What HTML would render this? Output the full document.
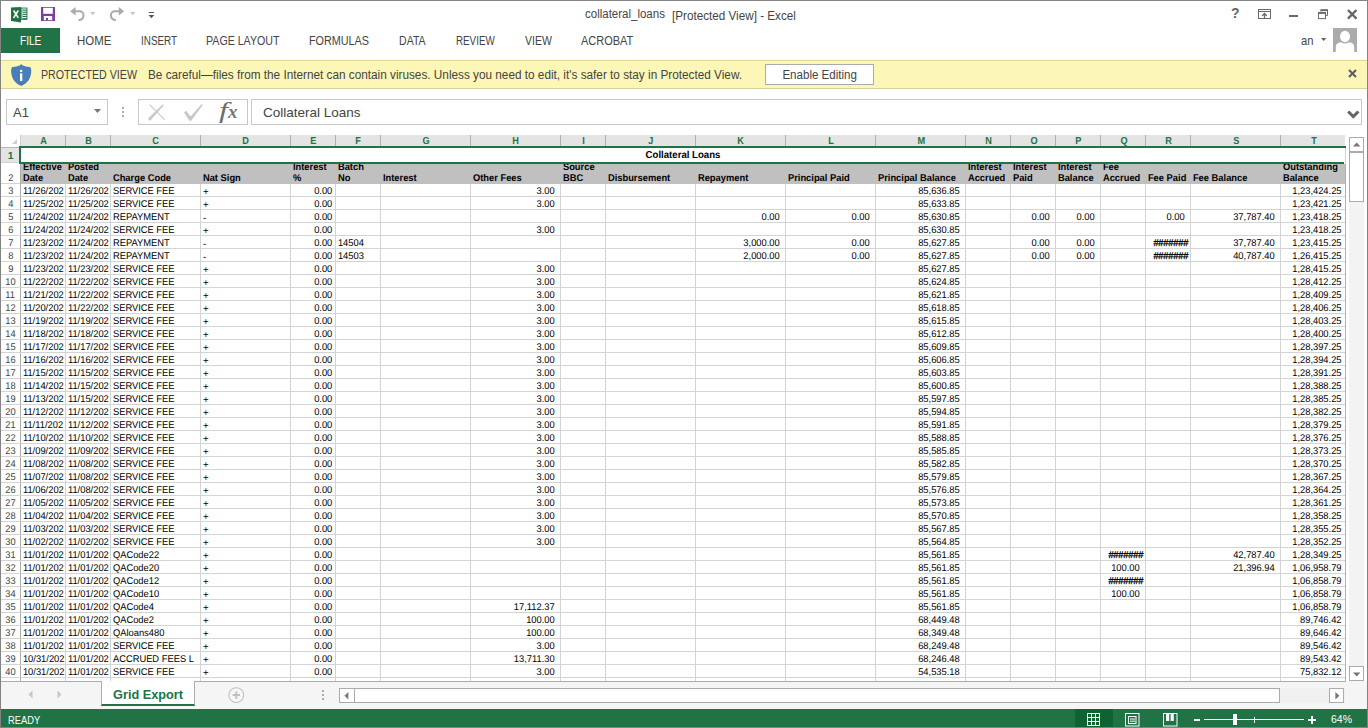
<!DOCTYPE html>
<html><head><meta charset="utf-8"><title>collateral_loans [Protected View] - Excel</title>
<style>
*{box-sizing:border-box;margin:0;padding:0}
html,body{width:1368px;height:728px;overflow:hidden;background:#fff;font-family:"Liberation Sans",sans-serif;color:#444}
#win{position:absolute;left:0;top:0;width:1368px;height:728px;border:1px solid #838383;border-right-color:#838383;overflow:hidden}
.abs{position:absolute}
/* title bar */
.ttl{position:absolute;line-height:15px;font-size:12.5px;color:#444;white-space:nowrap}
/* ribbon tabs */
#file{position:absolute;left:0;top:27px;width:59px;height:25px;background:#217346;color:#fff;font-size:12px;text-align:center;line-height:25px}
.sx{transform-origin:0 50%}
.tab{position:absolute;top:28px;height:25px;line-height:25px;font-size:12px;color:#444;white-space:nowrap}
/* protected bar */
#pv{position:absolute;left:0;top:59px;width:1366px;height:29px;background:#fcf7b6;border-top:1px solid #ddd78f;border-bottom:1px solid #d8d39a}
#pv .t1{position:absolute;left:40px;top:0;line-height:28px;font-size:12.5px;color:#444}
#pv .t2{position:absolute;left:147px;top:0;line-height:28px;font-size:12.3px;color:#444;white-space:nowrap}
#pv .btn{position:absolute;left:764px;top:3px;width:109px;height:21px;background:#fff;border:1px solid #ababab;font-size:12.3px;text-align:center;line-height:21px;color:#444}
/* formula bar */
.box{position:absolute;top:98px;height:26px;border:1px solid #c8c8c8;background:#fff}
/* grid */
#grid{position:absolute;left:-1px;top:-1px;width:1368px;height:728px;text-rendering:geometricPrecision}
.ch.last{border-right:none}
.ch{position:absolute;top:135px;height:11px;border-right:1px solid #b2b2b2;color:#217346;font-size:10.2px;text-align:center;line-height:13.4px;font-weight:bold;padding-left:1px}
.ch span{display:inline-block;transform:scaleX(0.9)}
.rh{position:absolute;left:1px;width:20px;color:#444;font-size:9.75px;text-align:center;line-height:15.4px;border-right:1px solid #ababab}
.rh span{display:inline-block;transform:scaleX(0.954)}
.rh.r2{line-height:34.4px}
.vl{position:absolute;top:146px;width:1px;height:540px;background:#d4d4d4}
.hl{position:absolute;left:1px;width:1345px;height:1px;background:#d4d4d4}
.c{position:absolute;height:12px;line-height:16.4px;font-size:9.8px;transform:scaleX(0.954);transform-origin:0 0;color:#000;white-space:nowrap;padding-left:2px}
.c.n{text-align:right;padding-right:5.5px;padding-left:0;transform-origin:100% 0}
.c.cD{line-height:18.4px;font-size:10.1px}
.c.n.cE{padding-right:2.8px}
.c.n.cT{padding-right:3.6px}
.c.n.hs{padding-right:2px;letter-spacing:-0.25px;-webkit-text-stroke:0.3px #000}
.h2{position:absolute;top:164px;height:20px;font-size:9.8px;transform:scaleX(0.954);transform-origin:0 0;font-weight:bold;color:#000;line-height:11px;white-space:nowrap;overflow:hidden}
.h2 span{position:absolute;left:2px;bottom:0.1px}
.sb{background:#fff;border:1px solid #ababab}
</style></head><body>
<div id="win">

<!-- quick access toolbar icons -->
<svg class="abs" style="left:10px;top:6px" width="17" height="16" viewBox="0 0 17 16">
<path d="M0,0.5 L10,0 L10,15.4 L0,13.9 Z" fill="#207245"/>
<rect x="10" y="0.6" width="6.4" height="12.2" fill="#207245"/>
<g fill="#fff"><rect x="10.6" y="1.5" width="0.9" height="10.4"/><rect x="11.5" y="1.5" width="4" height="1.1"/><rect x="11.5" y="3.7" width="4" height="1"/><rect x="11.5" y="5.8" width="4" height="1"/><rect x="11.5" y="7.9" width="4" height="1"/><rect x="11.5" y="10" width="4" height="1.1"/></g>
<path d="M2.6,3.5 L7.3,10.9 M7.3,3.5 L2.6,10.9" stroke="#fff" stroke-width="1.6" fill="none"/>
</svg>
<svg class="abs" style="left:40px;top:6px" width="14" height="14" viewBox="0 0 14 14">
<rect x="0" y="0" width="14" height="14" fill="#7e3f9b"/>
<rect x="2.2" y="0.8" width="9.6" height="6" fill="#fff"/>
<rect x="2.8" y="9" width="8.4" height="4.2" fill="#fff"/>
<rect x="5" y="11" width="2" height="2.2" fill="#7e3f9b"/>
</svg>
<svg class="abs" style="left:67.6px;top:4.6px" width="18" height="16" viewBox="0 0 18 16">
<path d="M1.2,5.2 L6.6,1 L6.6,4.1 L6.6,9.4 Z" fill="#ababab"/>
<path d="M6,5.2 H10.5 A4,4 0 0 1 14.5,9.2 A4.6,4.6 0 0 1 9.5,14" stroke="#ababab" stroke-width="2" fill="none"/>
</svg>
<svg class="abs" style="left:107.3px;top:5px" width="18" height="16" viewBox="0 0 18 16">
<g transform="translate(18,0) scale(-1,1)">
<path d="M1.8,5.2 L7.2,1 L7.2,4.1 L7.2,9.4 Z" fill="#ababab"/>
<path d="M6.6,5.2 H11.1 A4,4 0 0 1 15.1,9.2 A4.6,4.6 0 0 1 10.1,14" stroke="#ababab" stroke-width="2" fill="none"/>
</g></svg>
<svg class="abs" style="left:89px;top:11px" width="6" height="4" viewBox="0 0 6 4"><path d="M0,0H5.4L2.7,3.2Z" fill="#c6c6c6"/></svg>
<svg class="abs" style="left:129px;top:11px" width="6" height="4" viewBox="0 0 6 4"><path d="M0,0H5.4L2.7,3.2Z" fill="#c6c6c6"/></svg>
<svg class="abs" style="left:147px;top:10px" width="7" height="8" viewBox="0 0 7 8"><rect x="0.8" y="1" width="5.2" height="1" fill="#555"/><path d="M0.6,4H6.2L3.4,7.2Z" fill="#555"/></svg>
<!-- window controls -->
<div class="abs" style="left:1230px;top:5px;width:10px;font-size:14px;font-weight:bold;color:#666;line-height:15px">?</div>
<svg class="abs" style="left:1257px;top:8px" width="14" height="11" viewBox="0 0 14 11"><rect x="0.5" y="0.5" width="12" height="9" fill="none" stroke="#6a6a6a"/><path d="M0.5,2.5H12.5" stroke="#6a6a6a"/><path d="M6.5,4.6V9M4.1,6.9L6.5,4.5L8.9,6.9" stroke="#6a6a6a" stroke-width="1.3" fill="none"/></svg>
<div class="abs" style="left:1288px;top:14px;width:9px;height:2px;background:#6a6a6a"></div>
<svg class="abs" style="left:1317px;top:8px" width="11" height="11" viewBox="0 0 11 11"><path d="M3,2.6V0.9H9.5V6.4H8" fill="none" stroke="#6a6a6a" stroke-width="1"/><rect x="2.5" y="0.4" width="7.5" height="1.7" fill="#6a6a6a"/><rect x="0.5" y="3.6" width="7" height="6" fill="#fff" stroke="#6a6a6a" stroke-width="1"/><rect x="0" y="3.1" width="8" height="1.8" fill="#6a6a6a"/></svg>
<svg class="abs" style="left:1346px;top:8px" width="11" height="11" viewBox="0 0 11 11"><path d="M0.9,1L9.5,9.6M9.5,1L0.9,9.6" stroke="#656565" stroke-width="2.3"/></svg>
<div class="abs sx" style="left:1300.4px;top:32.6px;font-size:12.2px;color:#444;line-height:15px;transform:scaleX(0.92)">an</div>
<svg class="abs" style="left:1320px;top:37px" width="6" height="4" viewBox="0 0 6 4"><path d="M0,0H5.4L2.7,3Z" fill="#666"/></svg>
<svg class="abs" style="left:1332px;top:27px" width="24" height="24" viewBox="0 0 24 24"><rect width="24" height="24" fill="#ababab"/><ellipse cx="12" cy="8.5" rx="5" ry="5.8" fill="#fff"/><path d="M2.8,24 V19 Q2.8,14.6 8,14.2 Q12,16.8 16,14.2 Q21.2,14.6 21.2,19 V24Z" fill="#fff"/></svg>
<div class="ttl sx" style="left:584px;top:6px;transform:scaleX(0.92)">collateral_loans</div><div class="ttl sx" style="left:671px;top:8px;transform:scaleX(0.935)">[Protected View] - Excel</div>
<div id="file"></div><div class="tab sx" style="left:19px;color:#fff;transform:scaleX(0.84)">FILE</div>
<div class="tab sx" style="left:76px;transform:scaleX(0.953)">HOME</div>
<div class="tab sx" style="left:140px;transform:scaleX(0.823)">INSERT</div>
<div class="tab sx" style="left:205px;transform:scaleX(0.886)">PAGE LAYOUT</div>
<div class="tab sx" style="left:308px;transform:scaleX(0.9)">FORMULAS</div>
<div class="tab sx" style="left:398px;transform:scaleX(0.88)">DATA</div>
<div class="tab sx" style="left:455px;transform:scaleX(0.817)">REVIEW</div>
<div class="tab sx" style="left:524px;transform:scaleX(0.874)">VIEW</div>
<div class="tab sx" style="left:580px;transform:scaleX(0.916)">ACROBAT</div>
<div id="pv"><span class="t1 sx" style="transform:scaleX(0.853)">PROTECTED VIEW</span><span class="t2 sx" style="transform:scaleX(0.957)">Be careful—files from the Internet can contain viruses. Unless you need to edit, it's safer to stay in Protected View.</span><div class="btn"><span class="sx" style="display:inline-block;transform-origin:50% 50%;transform:scaleX(0.94)">Enable Editing</span></div><svg class="abs" style="left:10px;top:3px" width="21" height="23" viewBox="0 0 21 23"><path d="M10.2,0.3 C8,2 5,3 1.3,3 C0.1,4 0.1,6 0.2,8 C0.5,14 3.4,19 10.2,22 C17,19 19.9,14 20.2,8 C20.3,6 20.3,4 19.1,3 C15.4,3 12.4,2 10.2,0.3 Z" fill="#4a7ebb"/><rect x="9" y="9.4" width="2.3" height="7.6" fill="#fff"/><rect x="9" y="5.8" width="2.3" height="2.3" rx="0.6" fill="#fff"/></svg>
<svg class="abs" style="left:1346.6px;top:8.4px" width="10" height="10" viewBox="0 0 10 10"><path d="M1,1L8,8M8,1L1,8" stroke="#5e5e5e" stroke-width="2.1"/></svg></div>
<div class="box" style="left:5px;width:102px"></div>
<div class="box" style="left:137px;width:110px"></div>
<div class="box" style="left:250px;width:1111px"></div>

<div class="abs" style="left:12px;top:104px;font-size:13px;color:#444;line-height:15px">A1</div>
<svg class="abs" style="left:93px;top:108px" width="8" height="5" viewBox="0 0 8 5"><path d="M0,0H7L3.5,4Z" fill="#777"/></svg>
<div class="abs" style="left:121px;top:106px;width:2px;height:2px;background:#ababab"></div>
<div class="abs" style="left:121px;top:110px;width:2px;height:2px;background:#ababab"></div>
<div class="abs" style="left:121px;top:114px;width:2px;height:2px;background:#ababab"></div>
<svg class="abs" style="left:147px;top:103px" width="19" height="18" viewBox="0 0 19 18"><path d="M0.2,14.2 L14.6,0.6 L16,0.9 L2.4,16.4 L0.6,16.2 Z" fill="#c8c8c8"/><path d="M1,0.8 L2.4,0.6 L17.2,15.6 L16.4,16.3 Z" fill="#c8c8c8"/></svg>
<svg class="abs" style="left:183px;top:103px" width="20" height="18" viewBox="0 0 20 18"><path d="M0,8.6 L2.2,6.8 L6.6,12.4 L17.4,0.3 L18.8,1 L7.2,16.8 L5.4,16.8 Z" fill="#c8c8c8"/></svg>
<div class="abs sx" style="left:218px;top:96px;font-family:'Liberation Serif',serif;font-style:italic;font-size:24px;color:#6e6e6e;line-height:26px;transform:scaleX(1.35)">f</div>
<div class="abs" style="left:227px;top:101px;font-family:'Liberation Serif',serif;font-style:italic;font-weight:bold;font-size:19px;color:#777;line-height:20px">x</div>
<div class="abs" style="left:262px;top:104px;font-size:13.5px;color:#444;line-height:15px">Collateral Loans</div>
<svg class="abs" style="left:1346px;top:109px" width="13" height="9" viewBox="0 0 13 9"><path d="M1.2,1.5L6.3,6.6L11.4,1.5" stroke="#666" stroke-width="3.1" fill="none"/></svg>
<div id="grid">
<div class="abs" style="left:21px;top:135px;width:1324px;height:11px;background:#e4e4e4"></div><div class="abs" style="left:20px;top:135px;width:1px;height:11px;background:#cfcfcf"></div>
<svg class="abs" style="left:12px;top:139px" width="6" height="6" viewBox="0 0 6 6"><path d="M5,0V5H0Z" fill="#d0d0d0"/></svg>
<div class="ch" style="left:21px;width:45px"><span>A</span></div><div class="ch" style="left:66px;width:45px"><span>B</span></div><div class="ch" style="left:111px;width:90px"><span>C</span></div><div class="ch" style="left:201px;width:90px"><span>D</span></div><div class="ch" style="left:291px;width:45px"><span>E</span></div><div class="ch" style="left:336px;width:45px"><span>F</span></div><div class="ch" style="left:381px;width:90px"><span>G</span></div><div class="ch" style="left:471px;width:90px"><span>H</span></div><div class="ch" style="left:561px;width:45px"><span>I</span></div><div class="ch" style="left:606px;width:90px"><span>J</span></div><div class="ch" style="left:696px;width:90px"><span>K</span></div><div class="ch" style="left:786px;width:90px"><span>L</span></div><div class="ch" style="left:876px;width:90px"><span>M</span></div><div class="ch" style="left:966px;width:45px"><span>N</span></div><div class="ch" style="left:1011px;width:45px"><span>O</span></div><div class="ch" style="left:1056px;width:45px"><span>P</span></div><div class="ch" style="left:1101px;width:45px"><span>Q</span></div><div class="ch" style="left:1146px;width:45px"><span>R</span></div><div class="ch" style="left:1191px;width:90px"><span>S</span></div><div class="ch last" style="left:1281px;width:65px"><span>T</span></div>
<div class="abs" style="left:1px;top:146px;width:19px;height:535px;background:#fff"></div>
<div class="rh r1" style="top:148px;height:14px"><span>1</span></div><div class="rh r2" style="top:162px;height:22px"><span>2</span></div><div class="rh r3" style="top:184px;height:13px"><span>3</span></div><div class="rh r4" style="top:197px;height:13px"><span>4</span></div><div class="rh r5" style="top:210px;height:13px"><span>5</span></div><div class="rh r6" style="top:223px;height:13px"><span>6</span></div><div class="rh r7" style="top:236px;height:13px"><span>7</span></div><div class="rh r8" style="top:249px;height:13px"><span>8</span></div><div class="rh r9" style="top:262px;height:13px"><span>9</span></div><div class="rh r10" style="top:275px;height:13px"><span>10</span></div><div class="rh r11" style="top:288px;height:13px"><span>11</span></div><div class="rh r12" style="top:301px;height:13px"><span>12</span></div><div class="rh r13" style="top:314px;height:13px"><span>13</span></div><div class="rh r14" style="top:327px;height:13px"><span>14</span></div><div class="rh r15" style="top:340px;height:13px"><span>15</span></div><div class="rh r16" style="top:353px;height:13px"><span>16</span></div><div class="rh r17" style="top:366px;height:13px"><span>17</span></div><div class="rh r18" style="top:379px;height:13px"><span>18</span></div><div class="rh r19" style="top:392px;height:13px"><span>19</span></div><div class="rh r20" style="top:405px;height:13px"><span>20</span></div><div class="rh r21" style="top:418px;height:13px"><span>21</span></div><div class="rh r22" style="top:431px;height:13px"><span>22</span></div><div class="rh r23" style="top:444px;height:13px"><span>23</span></div><div class="rh r24" style="top:457px;height:13px"><span>24</span></div><div class="rh r25" style="top:470px;height:13px"><span>25</span></div><div class="rh r26" style="top:483px;height:13px"><span>26</span></div><div class="rh r27" style="top:496px;height:13px"><span>27</span></div><div class="rh r28" style="top:509px;height:13px"><span>28</span></div><div class="rh r29" style="top:522px;height:13px"><span>29</span></div><div class="rh r30" style="top:535px;height:13px"><span>30</span></div><div class="rh r31" style="top:548px;height:13px"><span>31</span></div><div class="rh r32" style="top:561px;height:13px"><span>32</span></div><div class="rh r33" style="top:574px;height:13px"><span>33</span></div><div class="rh r34" style="top:587px;height:13px"><span>34</span></div><div class="rh r35" style="top:600px;height:13px"><span>35</span></div><div class="rh r36" style="top:613px;height:13px"><span>36</span></div><div class="rh r37" style="top:626px;height:13px"><span>37</span></div><div class="rh r38" style="top:639px;height:13px"><span>38</span></div><div class="rh r39" style="top:652px;height:13px"><span>39</span></div><div class="rh r40" style="top:665px;height:13px"><span>40</span></div><div class="rh r41" style="top:678px;height:13px"><span>41</span></div>
<div class="abs" style="left:1px;top:148px;width:19px;height:14px;background:#e4e4e4"></div>
<div class="abs" style="left:1px;top:147px;width:19px;height:1px;background:#b8b8b8"></div><div class="abs" style="left:1px;top:162px;width:19px;height:1px;background:#b8b8b8"></div><div class="rh" style="top:148px;height:14px;line-height:18.6px;color:#217346;background:none;border:none;font-weight:bold;font-size:10.3px;width:19px">1</div>
<div class="abs" style="left:1px;top:183px;width:19px;height:1px;background:#d4d4d4"></div><div class="abs" style="left:1px;top:162px;width:19px;height:1px;background:#d4d4d4"></div>
<div class="abs" id="cells" style="left:0;top:146px;width:1346px;height:535px;overflow:hidden"><div class="abs" style="left:0;top:-146px;width:1346px;height:728px">
<div class="vl" style="left:65px"></div><div class="vl" style="left:110px"></div><div class="vl" style="left:200px"></div><div class="vl" style="left:290px"></div><div class="vl" style="left:335px"></div><div class="vl" style="left:380px"></div><div class="vl" style="left:470px"></div><div class="vl" style="left:560px"></div><div class="vl" style="left:605px"></div><div class="vl" style="left:695px"></div><div class="vl" style="left:785px"></div><div class="vl" style="left:875px"></div><div class="vl" style="left:965px"></div><div class="vl" style="left:1010px"></div><div class="vl" style="left:1055px"></div><div class="vl" style="left:1100px"></div><div class="vl" style="left:1145px"></div><div class="vl" style="left:1190px"></div><div class="vl" style="left:1280px"></div><div class="vl" style="left:1345px"></div><div class="hl" style="top:196px"></div><div class="hl" style="top:209px"></div><div class="hl" style="top:222px"></div><div class="hl" style="top:235px"></div><div class="hl" style="top:248px"></div><div class="hl" style="top:261px"></div><div class="hl" style="top:274px"></div><div class="hl" style="top:287px"></div><div class="hl" style="top:300px"></div><div class="hl" style="top:313px"></div><div class="hl" style="top:326px"></div><div class="hl" style="top:339px"></div><div class="hl" style="top:352px"></div><div class="hl" style="top:365px"></div><div class="hl" style="top:378px"></div><div class="hl" style="top:391px"></div><div class="hl" style="top:404px"></div><div class="hl" style="top:417px"></div><div class="hl" style="top:430px"></div><div class="hl" style="top:443px"></div><div class="hl" style="top:456px"></div><div class="hl" style="top:469px"></div><div class="hl" style="top:482px"></div><div class="hl" style="top:495px"></div><div class="hl" style="top:508px"></div><div class="hl" style="top:521px"></div><div class="hl" style="top:534px"></div><div class="hl" style="top:547px"></div><div class="hl" style="top:560px"></div><div class="hl" style="top:573px"></div><div class="hl" style="top:586px"></div><div class="hl" style="top:599px"></div><div class="hl" style="top:612px"></div><div class="hl" style="top:625px"></div><div class="hl" style="top:638px"></div><div class="hl" style="top:651px"></div><div class="hl" style="top:664px"></div><div class="hl" style="top:677px"></div><div class="hl" style="top:690px"></div><div class="abs" style="left:21px;top:164px;width:1324px;height:20px;background:#c0c0c0"></div><div class="h2" style="left:21px;width:44px"><span>Effective<br>Date</span></div><div class="h2" style="left:66px;width:44px"><span>Posted<br>Date</span></div><div class="h2" style="left:111px;width:89px"><span>Charge Code</span></div><div class="h2" style="left:201px;width:89px"><span>Nat Sign</span></div><div class="h2" style="left:291px;width:44px"><span>Interest<br>%</span></div><div class="h2" style="left:336px;width:44px"><span>Batch<br>No</span></div><div class="h2" style="left:381px;width:89px"><span>Interest</span></div><div class="h2" style="left:471px;width:89px"><span>Other Fees</span></div><div class="h2" style="left:561px;width:44px"><span>Source<br>BBC</span></div><div class="h2" style="left:606px;width:89px"><span>Disbursement</span></div><div class="h2" style="left:696px;width:89px"><span>Repayment</span></div><div class="h2" style="left:786px;width:89px"><span>Principal Paid</span></div><div class="h2" style="left:876px;width:89px"><span>Principal Balance</span></div><div class="h2" style="left:966px;width:44px"><span>Interest<br>Accrued</span></div><div class="h2" style="left:1011px;width:44px"><span>Interest<br>Paid</span></div><div class="h2" style="left:1056px;width:44px"><span>Interest<br>Balance</span></div><div class="h2" style="left:1101px;width:44px"><span>Fee<br>Accrued</span></div><div class="h2" style="left:1146px;width:44px"><span>Fee Paid</span></div><div class="h2" style="left:1191px;width:89px"><span>Fee Balance</span></div><div class="h2" style="left:1281px;width:64px"><span>Outstanding<br>Balance</span></div><div class="c cA" style="left:21px;top:184px;width:44px">11/26/202</div><div class="c cB" style="left:66px;top:184px;width:44px">11/26/202</div><div class="c cC" style="left:111px;top:184px;width:89px">SERVICE FEE</div><div class="c cD" style="left:201px;top:184px;width:89px">+</div><div class="c n cE" style="left:291px;top:184px;width:44px">0.00</div><div class="c n cH" style="left:471px;top:184px;width:89px">3.00</div><div class="c n cM" style="left:876px;top:184px;width:89px">85,636.85</div><div class="c n cT" style="left:1281px;top:184px;width:64px">1,23,424.25</div><div class="c cA" style="left:21px;top:197px;width:44px">11/25/202</div><div class="c cB" style="left:66px;top:197px;width:44px">11/25/202</div><div class="c cC" style="left:111px;top:197px;width:89px">SERVICE FEE</div><div class="c cD" style="left:201px;top:197px;width:89px">+</div><div class="c n cE" style="left:291px;top:197px;width:44px">0.00</div><div class="c n cH" style="left:471px;top:197px;width:89px">3.00</div><div class="c n cM" style="left:876px;top:197px;width:89px">85,633.85</div><div class="c n cT" style="left:1281px;top:197px;width:64px">1,23,421.25</div><div class="c cA" style="left:21px;top:210px;width:44px">11/24/202</div><div class="c cB" style="left:66px;top:210px;width:44px">11/24/202</div><div class="c cC" style="left:111px;top:210px;width:89px">REPAYMENT</div><div class="c cD" style="left:201px;top:210px;width:89px">-</div><div class="c n cE" style="left:291px;top:210px;width:44px">0.00</div><div class="c n cK" style="left:696px;top:210px;width:89px">0.00</div><div class="c n cL" style="left:786px;top:210px;width:89px">0.00</div><div class="c n cM" style="left:876px;top:210px;width:89px">85,630.85</div><div class="c n cO" style="left:1011px;top:210px;width:44px">0.00</div><div class="c n cP" style="left:1056px;top:210px;width:44px">0.00</div><div class="c n cR" style="left:1146px;top:210px;width:44px">0.00</div><div class="c n cS" style="left:1191px;top:210px;width:89px">37,787.40</div><div class="c n cT" style="left:1281px;top:210px;width:64px">1,23,418.25</div><div class="c cA" style="left:21px;top:223px;width:44px">11/24/202</div><div class="c cB" style="left:66px;top:223px;width:44px">11/24/202</div><div class="c cC" style="left:111px;top:223px;width:89px">SERVICE FEE</div><div class="c cD" style="left:201px;top:223px;width:89px">+</div><div class="c n cE" style="left:291px;top:223px;width:44px">0.00</div><div class="c n cH" style="left:471px;top:223px;width:89px">3.00</div><div class="c n cM" style="left:876px;top:223px;width:89px">85,630.85</div><div class="c n cT" style="left:1281px;top:223px;width:64px">1,23,418.25</div><div class="c cA" style="left:21px;top:236px;width:44px">11/23/202</div><div class="c cB" style="left:66px;top:236px;width:44px">11/24/202</div><div class="c cC" style="left:111px;top:236px;width:89px">REPAYMENT</div><div class="c cD" style="left:201px;top:236px;width:89px">-</div><div class="c n cE" style="left:291px;top:236px;width:44px">0.00</div><div class="c cF" style="left:336px;top:236px;width:44px">14504</div><div class="c n cK" style="left:696px;top:236px;width:89px">3,000.00</div><div class="c n cL" style="left:786px;top:236px;width:89px">0.00</div><div class="c n cM" style="left:876px;top:236px;width:89px">85,627.85</div><div class="c n cO" style="left:1011px;top:236px;width:44px">0.00</div><div class="c n cP" style="left:1056px;top:236px;width:44px">0.00</div><div class="c n hs cR" style="left:1146px;top:236px;width:44px">#######</div><div class="c n cS" style="left:1191px;top:236px;width:89px">37,787.40</div><div class="c n cT" style="left:1281px;top:236px;width:64px">1,23,415.25</div><div class="c cA" style="left:21px;top:249px;width:44px">11/23/202</div><div class="c cB" style="left:66px;top:249px;width:44px">11/24/202</div><div class="c cC" style="left:111px;top:249px;width:89px">REPAYMENT</div><div class="c cD" style="left:201px;top:249px;width:89px">-</div><div class="c n cE" style="left:291px;top:249px;width:44px">0.00</div><div class="c cF" style="left:336px;top:249px;width:44px">14503</div><div class="c n cK" style="left:696px;top:249px;width:89px">2,000.00</div><div class="c n cL" style="left:786px;top:249px;width:89px">0.00</div><div class="c n cM" style="left:876px;top:249px;width:89px">85,627.85</div><div class="c n cO" style="left:1011px;top:249px;width:44px">0.00</div><div class="c n cP" style="left:1056px;top:249px;width:44px">0.00</div><div class="c n hs cR" style="left:1146px;top:249px;width:44px">#######</div><div class="c n cS" style="left:1191px;top:249px;width:89px">40,787.40</div><div class="c n cT" style="left:1281px;top:249px;width:64px">1,26,415.25</div><div class="c cA" style="left:21px;top:262px;width:44px">11/23/202</div><div class="c cB" style="left:66px;top:262px;width:44px">11/23/202</div><div class="c cC" style="left:111px;top:262px;width:89px">SERVICE FEE</div><div class="c cD" style="left:201px;top:262px;width:89px">+</div><div class="c n cE" style="left:291px;top:262px;width:44px">0.00</div><div class="c n cH" style="left:471px;top:262px;width:89px">3.00</div><div class="c n cM" style="left:876px;top:262px;width:89px">85,627.85</div><div class="c n cT" style="left:1281px;top:262px;width:64px">1,28,415.25</div><div class="c cA" style="left:21px;top:275px;width:44px">11/22/202</div><div class="c cB" style="left:66px;top:275px;width:44px">11/22/202</div><div class="c cC" style="left:111px;top:275px;width:89px">SERVICE FEE</div><div class="c cD" style="left:201px;top:275px;width:89px">+</div><div class="c n cE" style="left:291px;top:275px;width:44px">0.00</div><div class="c n cH" style="left:471px;top:275px;width:89px">3.00</div><div class="c n cM" style="left:876px;top:275px;width:89px">85,624.85</div><div class="c n cT" style="left:1281px;top:275px;width:64px">1,28,412.25</div><div class="c cA" style="left:21px;top:288px;width:44px">11/21/202</div><div class="c cB" style="left:66px;top:288px;width:44px">11/22/202</div><div class="c cC" style="left:111px;top:288px;width:89px">SERVICE FEE</div><div class="c cD" style="left:201px;top:288px;width:89px">+</div><div class="c n cE" style="left:291px;top:288px;width:44px">0.00</div><div class="c n cH" style="left:471px;top:288px;width:89px">3.00</div><div class="c n cM" style="left:876px;top:288px;width:89px">85,621.85</div><div class="c n cT" style="left:1281px;top:288px;width:64px">1,28,409.25</div><div class="c cA" style="left:21px;top:301px;width:44px">11/20/202</div><div class="c cB" style="left:66px;top:301px;width:44px">11/22/202</div><div class="c cC" style="left:111px;top:301px;width:89px">SERVICE FEE</div><div class="c cD" style="left:201px;top:301px;width:89px">+</div><div class="c n cE" style="left:291px;top:301px;width:44px">0.00</div><div class="c n cH" style="left:471px;top:301px;width:89px">3.00</div><div class="c n cM" style="left:876px;top:301px;width:89px">85,618.85</div><div class="c n cT" style="left:1281px;top:301px;width:64px">1,28,406.25</div><div class="c cA" style="left:21px;top:314px;width:44px">11/19/202</div><div class="c cB" style="left:66px;top:314px;width:44px">11/19/202</div><div class="c cC" style="left:111px;top:314px;width:89px">SERVICE FEE</div><div class="c cD" style="left:201px;top:314px;width:89px">+</div><div class="c n cE" style="left:291px;top:314px;width:44px">0.00</div><div class="c n cH" style="left:471px;top:314px;width:89px">3.00</div><div class="c n cM" style="left:876px;top:314px;width:89px">85,615.85</div><div class="c n cT" style="left:1281px;top:314px;width:64px">1,28,403.25</div><div class="c cA" style="left:21px;top:327px;width:44px">11/18/202</div><div class="c cB" style="left:66px;top:327px;width:44px">11/18/202</div><div class="c cC" style="left:111px;top:327px;width:89px">SERVICE FEE</div><div class="c cD" style="left:201px;top:327px;width:89px">+</div><div class="c n cE" style="left:291px;top:327px;width:44px">0.00</div><div class="c n cH" style="left:471px;top:327px;width:89px">3.00</div><div class="c n cM" style="left:876px;top:327px;width:89px">85,612.85</div><div class="c n cT" style="left:1281px;top:327px;width:64px">1,28,400.25</div><div class="c cA" style="left:21px;top:340px;width:44px">11/17/202</div><div class="c cB" style="left:66px;top:340px;width:44px">11/17/202</div><div class="c cC" style="left:111px;top:340px;width:89px">SERVICE FEE</div><div class="c cD" style="left:201px;top:340px;width:89px">+</div><div class="c n cE" style="left:291px;top:340px;width:44px">0.00</div><div class="c n cH" style="left:471px;top:340px;width:89px">3.00</div><div class="c n cM" style="left:876px;top:340px;width:89px">85,609.85</div><div class="c n cT" style="left:1281px;top:340px;width:64px">1,28,397.25</div><div class="c cA" style="left:21px;top:353px;width:44px">11/16/202</div><div class="c cB" style="left:66px;top:353px;width:44px">11/16/202</div><div class="c cC" style="left:111px;top:353px;width:89px">SERVICE FEE</div><div class="c cD" style="left:201px;top:353px;width:89px">+</div><div class="c n cE" style="left:291px;top:353px;width:44px">0.00</div><div class="c n cH" style="left:471px;top:353px;width:89px">3.00</div><div class="c n cM" style="left:876px;top:353px;width:89px">85,606.85</div><div class="c n cT" style="left:1281px;top:353px;width:64px">1,28,394.25</div><div class="c cA" style="left:21px;top:366px;width:44px">11/15/202</div><div class="c cB" style="left:66px;top:366px;width:44px">11/15/202</div><div class="c cC" style="left:111px;top:366px;width:89px">SERVICE FEE</div><div class="c cD" style="left:201px;top:366px;width:89px">+</div><div class="c n cE" style="left:291px;top:366px;width:44px">0.00</div><div class="c n cH" style="left:471px;top:366px;width:89px">3.00</div><div class="c n cM" style="left:876px;top:366px;width:89px">85,603.85</div><div class="c n cT" style="left:1281px;top:366px;width:64px">1,28,391.25</div><div class="c cA" style="left:21px;top:379px;width:44px">11/14/202</div><div class="c cB" style="left:66px;top:379px;width:44px">11/15/202</div><div class="c cC" style="left:111px;top:379px;width:89px">SERVICE FEE</div><div class="c cD" style="left:201px;top:379px;width:89px">+</div><div class="c n cE" style="left:291px;top:379px;width:44px">0.00</div><div class="c n cH" style="left:471px;top:379px;width:89px">3.00</div><div class="c n cM" style="left:876px;top:379px;width:89px">85,600.85</div><div class="c n cT" style="left:1281px;top:379px;width:64px">1,28,388.25</div><div class="c cA" style="left:21px;top:392px;width:44px">11/13/202</div><div class="c cB" style="left:66px;top:392px;width:44px">11/15/202</div><div class="c cC" style="left:111px;top:392px;width:89px">SERVICE FEE</div><div class="c cD" style="left:201px;top:392px;width:89px">+</div><div class="c n cE" style="left:291px;top:392px;width:44px">0.00</div><div class="c n cH" style="left:471px;top:392px;width:89px">3.00</div><div class="c n cM" style="left:876px;top:392px;width:89px">85,597.85</div><div class="c n cT" style="left:1281px;top:392px;width:64px">1,28,385.25</div><div class="c cA" style="left:21px;top:405px;width:44px">11/12/202</div><div class="c cB" style="left:66px;top:405px;width:44px">11/12/202</div><div class="c cC" style="left:111px;top:405px;width:89px">SERVICE FEE</div><div class="c cD" style="left:201px;top:405px;width:89px">+</div><div class="c n cE" style="left:291px;top:405px;width:44px">0.00</div><div class="c n cH" style="left:471px;top:405px;width:89px">3.00</div><div class="c n cM" style="left:876px;top:405px;width:89px">85,594.85</div><div class="c n cT" style="left:1281px;top:405px;width:64px">1,28,382.25</div><div class="c cA" style="left:21px;top:418px;width:44px">11/11/202</div><div class="c cB" style="left:66px;top:418px;width:44px">11/12/202</div><div class="c cC" style="left:111px;top:418px;width:89px">SERVICE FEE</div><div class="c cD" style="left:201px;top:418px;width:89px">+</div><div class="c n cE" style="left:291px;top:418px;width:44px">0.00</div><div class="c n cH" style="left:471px;top:418px;width:89px">3.00</div><div class="c n cM" style="left:876px;top:418px;width:89px">85,591.85</div><div class="c n cT" style="left:1281px;top:418px;width:64px">1,28,379.25</div><div class="c cA" style="left:21px;top:431px;width:44px">11/10/202</div><div class="c cB" style="left:66px;top:431px;width:44px">11/10/202</div><div class="c cC" style="left:111px;top:431px;width:89px">SERVICE FEE</div><div class="c cD" style="left:201px;top:431px;width:89px">+</div><div class="c n cE" style="left:291px;top:431px;width:44px">0.00</div><div class="c n cH" style="left:471px;top:431px;width:89px">3.00</div><div class="c n cM" style="left:876px;top:431px;width:89px">85,588.85</div><div class="c n cT" style="left:1281px;top:431px;width:64px">1,28,376.25</div><div class="c cA" style="left:21px;top:444px;width:44px">11/09/202</div><div class="c cB" style="left:66px;top:444px;width:44px">11/09/202</div><div class="c cC" style="left:111px;top:444px;width:89px">SERVICE FEE</div><div class="c cD" style="left:201px;top:444px;width:89px">+</div><div class="c n cE" style="left:291px;top:444px;width:44px">0.00</div><div class="c n cH" style="left:471px;top:444px;width:89px">3.00</div><div class="c n cM" style="left:876px;top:444px;width:89px">85,585.85</div><div class="c n cT" style="left:1281px;top:444px;width:64px">1,28,373.25</div><div class="c cA" style="left:21px;top:457px;width:44px">11/08/202</div><div class="c cB" style="left:66px;top:457px;width:44px">11/08/202</div><div class="c cC" style="left:111px;top:457px;width:89px">SERVICE FEE</div><div class="c cD" style="left:201px;top:457px;width:89px">+</div><div class="c n cE" style="left:291px;top:457px;width:44px">0.00</div><div class="c n cH" style="left:471px;top:457px;width:89px">3.00</div><div class="c n cM" style="left:876px;top:457px;width:89px">85,582.85</div><div class="c n cT" style="left:1281px;top:457px;width:64px">1,28,370.25</div><div class="c cA" style="left:21px;top:470px;width:44px">11/07/202</div><div class="c cB" style="left:66px;top:470px;width:44px">11/08/202</div><div class="c cC" style="left:111px;top:470px;width:89px">SERVICE FEE</div><div class="c cD" style="left:201px;top:470px;width:89px">+</div><div class="c n cE" style="left:291px;top:470px;width:44px">0.00</div><div class="c n cH" style="left:471px;top:470px;width:89px">3.00</div><div class="c n cM" style="left:876px;top:470px;width:89px">85,579.85</div><div class="c n cT" style="left:1281px;top:470px;width:64px">1,28,367.25</div><div class="c cA" style="left:21px;top:483px;width:44px">11/06/202</div><div class="c cB" style="left:66px;top:483px;width:44px">11/08/202</div><div class="c cC" style="left:111px;top:483px;width:89px">SERVICE FEE</div><div class="c cD" style="left:201px;top:483px;width:89px">+</div><div class="c n cE" style="left:291px;top:483px;width:44px">0.00</div><div class="c n cH" style="left:471px;top:483px;width:89px">3.00</div><div class="c n cM" style="left:876px;top:483px;width:89px">85,576.85</div><div class="c n cT" style="left:1281px;top:483px;width:64px">1,28,364.25</div><div class="c cA" style="left:21px;top:496px;width:44px">11/05/202</div><div class="c cB" style="left:66px;top:496px;width:44px">11/05/202</div><div class="c cC" style="left:111px;top:496px;width:89px">SERVICE FEE</div><div class="c cD" style="left:201px;top:496px;width:89px">+</div><div class="c n cE" style="left:291px;top:496px;width:44px">0.00</div><div class="c n cH" style="left:471px;top:496px;width:89px">3.00</div><div class="c n cM" style="left:876px;top:496px;width:89px">85,573.85</div><div class="c n cT" style="left:1281px;top:496px;width:64px">1,28,361.25</div><div class="c cA" style="left:21px;top:509px;width:44px">11/04/202</div><div class="c cB" style="left:66px;top:509px;width:44px">11/04/202</div><div class="c cC" style="left:111px;top:509px;width:89px">SERVICE FEE</div><div class="c cD" style="left:201px;top:509px;width:89px">+</div><div class="c n cE" style="left:291px;top:509px;width:44px">0.00</div><div class="c n cH" style="left:471px;top:509px;width:89px">3.00</div><div class="c n cM" style="left:876px;top:509px;width:89px">85,570.85</div><div class="c n cT" style="left:1281px;top:509px;width:64px">1,28,358.25</div><div class="c cA" style="left:21px;top:522px;width:44px">11/03/202</div><div class="c cB" style="left:66px;top:522px;width:44px">11/03/202</div><div class="c cC" style="left:111px;top:522px;width:89px">SERVICE FEE</div><div class="c cD" style="left:201px;top:522px;width:89px">+</div><div class="c n cE" style="left:291px;top:522px;width:44px">0.00</div><div class="c n cH" style="left:471px;top:522px;width:89px">3.00</div><div class="c n cM" style="left:876px;top:522px;width:89px">85,567.85</div><div class="c n cT" style="left:1281px;top:522px;width:64px">1,28,355.25</div><div class="c cA" style="left:21px;top:535px;width:44px">11/02/202</div><div class="c cB" style="left:66px;top:535px;width:44px">11/02/202</div><div class="c cC" style="left:111px;top:535px;width:89px">SERVICE FEE</div><div class="c cD" style="left:201px;top:535px;width:89px">+</div><div class="c n cE" style="left:291px;top:535px;width:44px">0.00</div><div class="c n cH" style="left:471px;top:535px;width:89px">3.00</div><div class="c n cM" style="left:876px;top:535px;width:89px">85,564.85</div><div class="c n cT" style="left:1281px;top:535px;width:64px">1,28,352.25</div><div class="c cA" style="left:21px;top:548px;width:44px">11/01/202</div><div class="c cB" style="left:66px;top:548px;width:44px">11/01/202</div><div class="c cC" style="left:111px;top:548px;width:89px">QACode22</div><div class="c cD" style="left:201px;top:548px;width:89px">+</div><div class="c n cE" style="left:291px;top:548px;width:44px">0.00</div><div class="c n cM" style="left:876px;top:548px;width:89px">85,561.85</div><div class="c n hs cQ" style="left:1101px;top:548px;width:44px">#######</div><div class="c n cS" style="left:1191px;top:548px;width:89px">42,787.40</div><div class="c n cT" style="left:1281px;top:548px;width:64px">1,28,349.25</div><div class="c cA" style="left:21px;top:561px;width:44px">11/01/202</div><div class="c cB" style="left:66px;top:561px;width:44px">11/01/202</div><div class="c cC" style="left:111px;top:561px;width:89px">QACode20</div><div class="c cD" style="left:201px;top:561px;width:89px">+</div><div class="c n cE" style="left:291px;top:561px;width:44px">0.00</div><div class="c n cM" style="left:876px;top:561px;width:89px">85,561.85</div><div class="c n cQ" style="left:1101px;top:561px;width:44px">100.00</div><div class="c n cS" style="left:1191px;top:561px;width:89px">21,396.94</div><div class="c n cT" style="left:1281px;top:561px;width:64px">1,06,958.79</div><div class="c cA" style="left:21px;top:574px;width:44px">11/01/202</div><div class="c cB" style="left:66px;top:574px;width:44px">11/01/202</div><div class="c cC" style="left:111px;top:574px;width:89px">QACode12</div><div class="c cD" style="left:201px;top:574px;width:89px">+</div><div class="c n cE" style="left:291px;top:574px;width:44px">0.00</div><div class="c n cM" style="left:876px;top:574px;width:89px">85,561.85</div><div class="c n hs cQ" style="left:1101px;top:574px;width:44px">#######</div><div class="c n cT" style="left:1281px;top:574px;width:64px">1,06,858.79</div><div class="c cA" style="left:21px;top:587px;width:44px">11/01/202</div><div class="c cB" style="left:66px;top:587px;width:44px">11/01/202</div><div class="c cC" style="left:111px;top:587px;width:89px">QACode10</div><div class="c cD" style="left:201px;top:587px;width:89px">+</div><div class="c n cE" style="left:291px;top:587px;width:44px">0.00</div><div class="c n cM" style="left:876px;top:587px;width:89px">85,561.85</div><div class="c n cQ" style="left:1101px;top:587px;width:44px">100.00</div><div class="c n cT" style="left:1281px;top:587px;width:64px">1,06,858.79</div><div class="c cA" style="left:21px;top:600px;width:44px">11/01/202</div><div class="c cB" style="left:66px;top:600px;width:44px">11/01/202</div><div class="c cC" style="left:111px;top:600px;width:89px">QACode4</div><div class="c cD" style="left:201px;top:600px;width:89px">+</div><div class="c n cE" style="left:291px;top:600px;width:44px">0.00</div><div class="c n cH" style="left:471px;top:600px;width:89px">17,112.37</div><div class="c n cM" style="left:876px;top:600px;width:89px">85,561.85</div><div class="c n cT" style="left:1281px;top:600px;width:64px">1,06,858.79</div><div class="c cA" style="left:21px;top:613px;width:44px">11/01/202</div><div class="c cB" style="left:66px;top:613px;width:44px">11/01/202</div><div class="c cC" style="left:111px;top:613px;width:89px">QACode2</div><div class="c cD" style="left:201px;top:613px;width:89px">+</div><div class="c n cE" style="left:291px;top:613px;width:44px">0.00</div><div class="c n cH" style="left:471px;top:613px;width:89px">100.00</div><div class="c n cM" style="left:876px;top:613px;width:89px">68,449.48</div><div class="c n cT" style="left:1281px;top:613px;width:64px">89,746.42</div><div class="c cA" style="left:21px;top:626px;width:44px">11/01/202</div><div class="c cB" style="left:66px;top:626px;width:44px">11/01/202</div><div class="c cC" style="left:111px;top:626px;width:89px">QAloans480</div><div class="c cD" style="left:201px;top:626px;width:89px">+</div><div class="c n cE" style="left:291px;top:626px;width:44px">0.00</div><div class="c n cH" style="left:471px;top:626px;width:89px">100.00</div><div class="c n cM" style="left:876px;top:626px;width:89px">68,349.48</div><div class="c n cT" style="left:1281px;top:626px;width:64px">89,646.42</div><div class="c cA" style="left:21px;top:639px;width:44px">11/01/202</div><div class="c cB" style="left:66px;top:639px;width:44px">11/01/202</div><div class="c cC" style="left:111px;top:639px;width:89px">SERVICE FEE</div><div class="c cD" style="left:201px;top:639px;width:89px">+</div><div class="c n cE" style="left:291px;top:639px;width:44px">0.00</div><div class="c n cH" style="left:471px;top:639px;width:89px">3.00</div><div class="c n cM" style="left:876px;top:639px;width:89px">68,249.48</div><div class="c n cT" style="left:1281px;top:639px;width:64px">89,546.42</div><div class="c cA" style="left:21px;top:652px;width:44px">10/31/202</div><div class="c cB" style="left:66px;top:652px;width:44px">11/01/202</div><div class="c cC" style="left:111px;top:652px;width:89px">ACCRUED FEES L</div><div class="c cD" style="left:201px;top:652px;width:89px">+</div><div class="c n cE" style="left:291px;top:652px;width:44px">0.00</div><div class="c n cH" style="left:471px;top:652px;width:89px">13,711.30</div><div class="c n cM" style="left:876px;top:652px;width:89px">68,246.48</div><div class="c n cT" style="left:1281px;top:652px;width:64px">89,543.42</div><div class="c cA" style="left:21px;top:665px;width:44px">10/31/202</div><div class="c cB" style="left:66px;top:665px;width:44px">11/01/202</div><div class="c cC" style="left:111px;top:665px;width:89px">SERVICE FEE</div><div class="c cD" style="left:201px;top:665px;width:89px">+</div><div class="c n cE" style="left:291px;top:665px;width:44px">0.00</div><div class="c n cH" style="left:471px;top:665px;width:89px">3.00</div><div class="c n cM" style="left:876px;top:665px;width:89px">54,535.18</div><div class="c n cT" style="left:1281px;top:665px;width:64px">75,832.12</div>
<div class="abs" style="left:21px;top:148px;width:1324px;height:14px;background:#fff"></div>
<div class="abs" style="left:1345px;top:148px;width:1px;height:14px;background:#d4d4d4"></div>
<div class="abs" style="left:21px;top:148px;width:1324px;height:14px;line-height:16px;text-align:center;font-size:10.1px;font-weight:bold;color:#000;transform:scaleX(0.954)">Collateral Loans</div>
<div class="abs" style="left:19px;top:146px;width:1327px;height:2px;background:#217346"></div>
<div class="abs" style="left:19px;top:162px;width:1325px;height:2px;background:#217346"></div>
<div class="abs" style="left:19px;top:146px;width:2px;height:18px;background:#217346"></div>
</div></div>
</div>
<!-- vertical scrollbar -->
<div class="abs" style="left:1348px;top:151px;width:15px;height:516px;background:#f3f3f3"></div>
<div class="abs sb" style="left:1348px;top:136px;width:15px;height:15px"></div>
<svg class="abs" style="left:1352px;top:141px" width="8" height="5" viewBox="0 0 8 5"><path d="M0,4.4H7.4L3.7,0.4Z" fill="#777"/></svg>
<div class="abs sb" style="left:1348px;top:151px;width:15px;height:50px"></div>
<div class="abs sb" style="left:1348px;top:665px;width:15px;height:15px"></div>
<svg class="abs" style="left:1352px;top:671px" width="8" height="5" viewBox="0 0 8 5"><path d="M0,0.4H7.4L3.7,4.4Z" fill="#777"/></svg>
<!-- tab bar -->
<div class="abs" style="left:0;top:680px;width:1366px;height:28px;background:#f5f5f5"></div><div class="abs" style="left:0;top:680px;width:1345px;height:1px;background:#ababab"></div><div class="abs" style="left:1344px;top:163px;width:1px;height:518px;background:#b0b0b0"></div>
<div class="abs" style="left:100px;top:680px;width:94px;height:25px;background:#fff;border-left:1px solid #ababab;border-right:1px solid #ababab;border-bottom:2px solid #217346"></div>
<div class="abs" style="left:100px;top:684px;width:94px;text-align:center;font-size:13.5px;font-weight:bold;color:#217346;line-height:19px;white-space:nowrap;transform:scaleX(0.94)">Grid Export</div>
<svg class="abs" style="left:27px;top:689px" width="5" height="9" viewBox="0 0 5 9"><path d="M4.5,0.5V8.5L0.5,4.5Z" fill="#c6c6c6"/></svg>
<svg class="abs" style="left:56px;top:689px" width="5" height="9" viewBox="0 0 5 9"><path d="M0.5,0.5V8.5L4.5,4.5Z" fill="#c6c6c6"/></svg>
<svg class="abs" style="left:227px;top:686px" width="17" height="17" viewBox="0 0 17 17"><circle cx="8.3" cy="8.1" r="7.4" fill="#f7f7f7" stroke="#c0c0c0" stroke-width="1.1"/><path d="M4.6,8.1H12M8.3,4.4V11.8" stroke="#c0c0c0" stroke-width="2"/></svg>
<div class="abs" style="left:321px;top:689px;width:2px;height:2px;background:#ababab"></div>
<div class="abs" style="left:321px;top:693px;width:2px;height:2px;background:#ababab"></div>
<div class="abs" style="left:321px;top:697px;width:2px;height:2px;background:#ababab"></div>
<!-- horizontal scrollbar -->
<div class="abs" style="left:338px;top:687px;width:1006px;height:15px;background:#f0f0f0"></div>
<div class="abs sb" style="left:338px;top:687px;width:16px;height:15px"></div>
<svg class="abs" style="left:343px;top:691px" width="5" height="8" viewBox="0 0 5 8"><path d="M4.4,0V7.4L0.4,3.7Z" fill="#777"/></svg>
<div class="abs sb" style="left:353px;top:687px;width:926px;height:15px"></div>
<div class="abs sb" style="left:1328px;top:687px;width:15px;height:15px"></div>
<svg class="abs" style="left:1334px;top:691px" width="5" height="8" viewBox="0 0 5 8"><path d="M0.4,0V7.4L4.4,3.7Z" fill="#777"/></svg>
<!-- status bar -->
<div class="abs" style="left:0;top:708px;width:1366px;height:20px;background:#217346"></div>
<div class="abs sx" style="left:7px;top:712px;font-size:11.5px;color:#fff;line-height:15px;transform:scaleX(0.81)">READY</div>
<div class="abs" style="left:1074px;top:708px;width:38px;height:20px;background:#0f6332"></div>
<svg class="abs" style="left:1086px;top:712px" width="14" height="14" viewBox="0 0 14 14"><rect x="0.5" y="0.5" width="12" height="12" fill="none" stroke="#fff"/><path d="M4.5,0V13M8.5,0V13M0,4.5H13M0,8.5H13" stroke="#fff" fill="none"/></svg>
<svg class="abs" style="left:1124px;top:712px" width="15" height="14" viewBox="0 0 15 14"><rect x="0.5" y="0.5" width="13.5" height="12.5" fill="none" stroke="#fff"/><rect x="3.5" y="3.5" width="7.5" height="7" fill="none" stroke="#fff"/><path d="M5,6H10M5,8.2H10" stroke="#fff"/></svg>
<svg class="abs" style="left:1162px;top:712px" width="15" height="14" viewBox="0 0 15 14"><rect x="0.5" y="0.5" width="13.5" height="12.5" fill="none" stroke="#fff"/><rect x="3" y="0.5" width="3.2" height="7.5" fill="#fff"/><rect x="7.6" y="0.5" width="3.2" height="7.5" fill="#fff"/></svg>
<div class="abs" style="left:1193px;top:718px;width:6px;height:2px;background:#fff"></div>
<div class="abs" style="left:1203px;top:718px;width:100px;height:1px;background:#fff"></div>
<div class="abs" style="left:1232px;top:713px;width:4px;height:11px;background:#fff"></div>
<div class="abs" style="left:1253px;top:716px;width:1px;height:6px;background:#fff"></div>
<div class="abs" style="left:1307px;top:718px;width:8px;height:2px;background:#fff"></div>
<div class="abs" style="left:1310px;top:715px;width:2px;height:8px;background:#fff"></div>
<div class="abs sx" style="left:1330px;top:710.6px;font-size:11.5px;color:#fff;line-height:15px;transform:scaleX(0.91)">64%</div>
</div>
</body></html>
